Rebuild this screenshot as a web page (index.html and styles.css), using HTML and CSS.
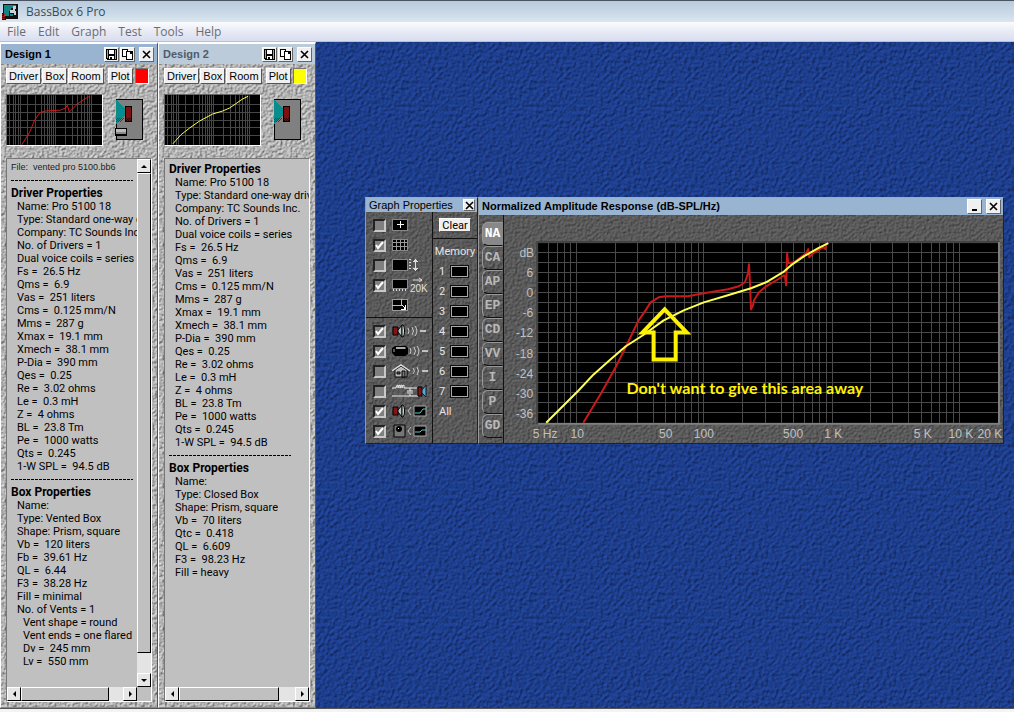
FILE: index.html
```html
<!DOCTYPE html>
<html lang="en">
<head>
    <meta charset="UTF-8">
    <meta name="viewport" content="width=device-width, initial-scale=1.0">
    <title>BassBox 6 Pro</title>
    <link rel="stylesheet" href="styles.css">
</head>
<body>
    <header class="app-title">
        <svg class="app-icon" viewBox="0 0 16 16" shape-rendering="crispEdges">
            <path fill="#111" d="M1 0h15v15H4v1H0V9h1z"/>
            <path fill="#128484" d="M2 1h12v3H9v3H7v5H2z"/>
            <path fill="#c8d4d8" d="M11 2h3v3h-1v2h1v4h-2V9H8V6h3z"/>
            <path fill="#128484" d="M8 10h3v2H8z"/>
            <path fill="#8a1c1c" d="M0 10h1v1H0zM2 10h1v1H2zM0 12h3v1H0zM0 14h3v1H0z"/>
        </svg>
        <span>BassBox 6 Pro</span>
    </header>
    <nav class="menu">
        <a href="#">File</a>
        <a href="#">Edit</a>
        <a href="#">Graph</a>
        <a href="#">Test</a>
        <a href="#">Tools</a>
        <a href="#">Help</a>
    </nav>

    <!-- shared shapes -->
    <svg class="defs" width="0" height="0">
        <symbol id="ico-save" viewBox="0 0 11 11" shape-rendering="crispEdges">
            <path d="M0 0h11v11H1v-1H0z"/>
            <path fill="#fff" d="M3 1h5v4H3zM3 7h5v3H3z"/>
            <path fill="#9aa" d="M1 1h1v8H1zM9 1h1v9H9z"/>
            <path d="M4 8h2v2H4z"/>
        </symbol>
        <symbol id="ico-copy" viewBox="0 0 11 11" shape-rendering="crispEdges">
            <path d="M0 0h6v2h5v9H4V8H0z"/>
            <path fill="#fff" d="M1 1h4v1H4v5H1zM5 3h3v2h2v5H5z"/>
        </symbol>
        <symbol id="ico-close" viewBox="0 0 9 9">
            <path d="M1 1l7 7M8 1l-7 7" stroke="#000" stroke-width="1.6"/>
        </symbol>
        <symbol id="mini-grid" viewBox="0 0 96 50">
            <path fill="none" stroke="#484848" shape-rendering="crispEdges" d="M3 0v50M7 0v50M9 0v50M12 0v50M14 0v50M21 0v50M29 0v50M35 0v50M38 0v50M41 0v50M43 0v50M45 0v50M47 0v50M49 0v50M59 0v50M66 0v50M71 0v50M75 0v50M78 0v50M81 0v50M83 0v50M85 0v50M0 9h96M0 17h96M0 25h96M0 33h96M0 41h96"/>
        </symbol>
        <symbol id="ico-driver" viewBox="0 0 14 14">
            <path fill="#861414" stroke="#000" d="M1 3h5v8H1z"/>
            <path fill="#b9c4c4" stroke="#000" d="M6 6l4-5v12L6 8z"/>
            <path fill="#cdd" stroke="#000" d="M10 1h1c2 2 2 10 0 12h-1z"/>
        </symbol>
        <symbol id="ico-waves" viewBox="0 0 20 12">
            <path fill="none" stroke="#ccc" d="M1 3q2 3 0 6M5 2q3 4 0 8M8 1q4 5 0 10"/>
            <path stroke="#ddd" stroke-width="1.6" d="M13 6h6"/>
        </symbol>
        <symbol id="ico-cabinet" viewBox="0 0 28 42" shape-rendering="crispEdges">
            <path fill="#808080" stroke="#000" d="M1 1h26v40H1z"/>
            <path fill="#0a8c8c" d="M1 2l9 8v8l-9 8z"/>
            <path fill="none" stroke="#055" stroke-dasharray="1 1" d="M1 21h7M1 23h5M2 20h7M2 22h5"/>
            <path fill="#801010" stroke="#000" d="M10 8h6v15h-6z"/>
            <path stroke="#300" stroke-dasharray="1 1" d="M11 20h5M12 21h4M11 22h5"/>
        </symbol>
    </svg>

    <main class="workspace">
        <section class="design active">
            <div class="design-title">
                <h2>Design 1</h2>
                <button class="tool" aria-label="Save"><svg width="11" height="11"><use href="#ico-save"/></svg></button>
                <button class="tool" aria-label="Copy"><svg width="11" height="11"><use href="#ico-copy"/></svg></button>
                <button class="tool close" aria-label="Close"><svg width="9" height="9"><use href="#ico-close"/></svg></button>
            </div>
            <div class="design-bar">
                <button>Driver</button>
                <button>Box</button>
                <button>Room</button>
                <button class="plot">Plot</button>
                <button class="swatch red" aria-label="Plot color"></button>
            </div>
            <div class="preview">
                <svg class="mini" viewBox="0 0 96 50">
                    <use href="#mini-grid"/>
                    <polyline fill="none" stroke="#d01c1c" points="15,50 23,37 28,25 33,18 38,16 54,15 59,13 61,10 63,17 65,15 71,9 78,4 84,1"/>
                </svg>
                <svg class="cabinet" viewBox="0 0 28 42" shape-rendering="crispEdges">
                    <use href="#ico-cabinet"/>
                    <path fill="#000" d="M0 30h12v8H0z"/>
                    <path fill="#bbb" d="M1 31h10v3H1z"/>
                    <path fill="#888" d="M1 34h10v2H1z"/>
                </svg>
            </div>
            <div class="list">
                <div class="list-text">
                    <p class="file">File:  vented pro 5100.bb6</p>
                    <hr>
                    <h3>Driver Properties</h3>
                    <ul>
                        <li>Name: Pro 5100 18</li>
                        <li>Type: Standard one-way driver</li>
                        <li>Company: TC Sounds Inc.</li>
                        <li>No. of Drivers = 1</li>
                        <li>Dual voice coils = series</li>
                        <li>Fs =  26.5 Hz</li>
                        <li>Qms =  6.9</li>
                        <li>Vas =  251 liters</li>
                        <li>Cms =  0.125 mm/N</li>
                        <li>Mms =  287 g</li>
                        <li>Xmax =  19.1 mm</li>
                        <li>Xmech =  38.1 mm</li>
                        <li>P-Dia =  390 mm</li>
                        <li>Qes =  0.25</li>
                        <li>Re =  3.02 ohms</li>
                        <li>Le =  0.3 mH</li>
                        <li>Z =  4 ohms</li>
                        <li>BL =  23.8 Tm</li>
                        <li>Pe =  1000 watts</li>
                        <li>Qts =  0.245</li>
                        <li>1-W SPL =  94.5 dB</li>
                    </ul>
                    <hr>
                    <h3>Box Properties</h3>
                    <ul>
                        <li>Name:</li>
                        <li>Type: Vented Box</li>
                        <li>Shape: Prism, square</li>
                        <li>Vb =  120 liters</li>
                        <li>Fb =  39.61 Hz</li>
                        <li>QL =  6.44</li>
                        <li>F3 =  38.28 Hz</li>
                        <li>Fill = minimal</li>
                        <li>No. of Vents = 1</li>
                        <li class="sub">Vent shape = round</li>
                        <li class="sub">Vent ends = one flared</li>
                        <li class="sub">Dv =  245 mm</li>
                        <li class="sub">Lv =  550 mm</li>
                    </ul>
                </div>
                <div class="scroll-y">
                    <button aria-label="Scroll up"><i class="up"></i></button>
                    <div class="thumb"></div>
                    <div class="track"></div>
                    <button aria-label="Scroll down"><i class="down"></i></button>
                </div>
                <div class="scroll-x">
                    <button aria-label="Scroll left"><i class="left"></i></button>
                    <div class="thumb"></div>
                    <div class="track"></div>
                    <button aria-label="Scroll right"><i class="right"></i></button>
                </div>
            </div>
        </section>

        <section class="design">
            <div class="design-title">
                <h2>Design 2</h2>
                <button class="tool" aria-label="Save"><svg width="11" height="11"><use href="#ico-save"/></svg></button>
                <button class="tool" aria-label="Copy"><svg width="11" height="11"><use href="#ico-copy"/></svg></button>
                <button class="tool close" aria-label="Close"><svg width="9" height="9"><use href="#ico-close"/></svg></button>
            </div>
            <div class="design-bar">
                <button>Driver</button>
                <button>Box</button>
                <button>Room</button>
                <button class="plot">Plot</button>
                <button class="swatch yellow" aria-label="Plot color"></button>
            </div>
            <div class="preview">
                <svg class="mini" viewBox="0 0 96 50">
                    <use href="#mini-grid"/>
                    <polyline fill="none" stroke="#ffff50" points="8,49 16,40 25,33 35,26 48,19 58,16 65,13 71,9 78,4 84,1"/>
                </svg>
                <svg class="cabinet" viewBox="0 0 28 42"><use href="#ico-cabinet"/></svg>
            </div>
            <div class="list no-y">
                <div class="list-text">
                    <h3>Driver Properties</h3>
                    <ul>
                        <li>Name: Pro 5100 18</li>
                        <li>Type: Standard one-way driver</li>
                        <li>Company: TC Sounds Inc.</li>
                        <li>No. of Drivers = 1</li>
                        <li>Dual voice coils = series</li>
                        <li>Fs =  26.5 Hz</li>
                        <li>Qms =  6.9</li>
                        <li>Vas =  251 liters</li>
                        <li>Cms =  0.125 mm/N</li>
                        <li>Mms =  287 g</li>
                        <li>Xmax =  19.1 mm</li>
                        <li>Xmech =  38.1 mm</li>
                        <li>P-Dia =  390 mm</li>
                        <li>Qes =  0.25</li>
                        <li>Re =  3.02 ohms</li>
                        <li>Le =  0.3 mH</li>
                        <li>Z =  4 ohms</li>
                        <li>BL =  23.8 Tm</li>
                        <li>Pe =  1000 watts</li>
                        <li>Qts =  0.245</li>
                        <li>1-W SPL =  94.5 dB</li>
                    </ul>
                    <hr>
                    <h3>Box Properties</h3>
                    <ul>
                        <li>Name:</li>
                        <li>Type: Closed Box</li>
                        <li>Shape: Prism, square</li>
                        <li>Vb =  70 liters</li>
                        <li>Qtc =  0.418</li>
                        <li>QL =  6.609</li>
                        <li>F3 =  98.23 Hz</li>
                        <li>Fill = heavy</li>
                    </ul>
                </div>
                <div class="scroll-x">
                    <button aria-label="Scroll left"><i class="left"></i></button>
                    <div class="thumb"></div>
                    <div class="track"></div>
                    <button aria-label="Scroll right"><i class="right"></i></button>
                </div>
            </div>
        </section>

        <div class="desktop">
            <section class="window props">
                <div class="window-title">
                    <h2>Graph Properties</h2>
                    <button class="tool" aria-label="Close"><svg width="9" height="9"><use href="#ico-close"/></svg></button>
                </div>
                <div class="props-body">
                    <div class="props-options">
                        <div class="options">
                            <label><input type="checkbox" aria-label="Cursor">
                                <svg width="16" height="12" shape-rendering="crispEdges"><path stroke="#888" d="M0 0h15v11H0z"/><path fill="#fff" d="M5 5h7v1H5zM8 2h1v7H8z"/></svg></label>
                            <label><input type="checkbox" aria-label="Grid" checked>
                                <svg width="16" height="12" shape-rendering="crispEdges"><path stroke="#888" d="M0 0h15v11H0z"/><path fill="#999" d="M1 3h14v1H1zM1 7h14v1H1zM4 1h1v10H4zM8 1h1v10H8zM12 1h1v10h-1z"/></svg></label>
                            <label><input type="checkbox" aria-label="Amplitude range">
                                <svg width="28" height="12" shape-rendering="crispEdges"><path stroke="#888" d="M0 0h15v11H0z"/><path fill="#ddd" d="M17 0h2v1h-2zM17 3h2v1h-2zM17 6h2v1h-2zM17 9h2v1h-2zM23 0h1v12h-1zM22 1h3v1h-3zM21 2h5v1h-5zM22 10h3v1h-3zM21 9h5v1h-5z"/></svg></label>
                            <label><input type="checkbox" aria-label="Extend to 20K" checked>
                                <svg width="36" height="16"><path stroke="#888" shape-rendering="crispEdges" d="M0 2h15v9H0z"/><path stroke="#ddd" shape-rendering="crispEdges" d="M1 12v2M4 12v2M7 12v2M10 12v2M13 12v2"/><path fill="none" stroke="#ddd" d="M21 3h9M27 1l3 2-3 2"/><text class="tiny" x="18" y="15">20K</text></svg></label>
                            <label class="icon-only">
                                <svg width="16" height="12" shape-rendering="crispEdges"><path stroke="#999" d="M0 0h15v11H0z"/><path fill="none" stroke="#bbb" d="M0 6h9V0"/><path fill="#fff" d="M10 6h1v1h-1zM11 7h1v1h-1zM14 6v5H9v-1h3V8h1V6z"/></svg></label>
                        </div>
                        <div class="options sources">
                            <label><input type="checkbox" aria-label="Driver response" checked>
                                <svg width="14" height="14"><use href="#ico-driver"/></svg><svg width="20" height="12"><use href="#ico-waves"/></svg></label>
                            <label><input type="checkbox" aria-label="Box response" checked>
                                <svg width="16" height="14"><path d="M3 2h11l2 2v6l-3 2H3L0 9V4z"/><path fill="#aaa" d="M4 3h9l1 1-1 1H4z"/><path fill="#555" d="M1 5h2v3H1z"/></svg><svg width="20" height="12"><use href="#ico-waves"/></svg></label>
                            <label><input type="checkbox" aria-label="Room response">
                                <svg width="36" height="14"><path fill="#bbb" stroke="#000" d="M3 6l6-4 6 4v7H3z"/><path fill="none" stroke="#ddd" stroke-width="1.5" d="M0 7l9-6 9 6"/><path stroke="#000" fill="#777" d="M5 8h3v2H5zM10 7h3v6h-3z"/><path fill="none" stroke="#ccc" d="M21 4q3 3 0 6M25 3q3 4 0 8"/><path stroke="#ddd" stroke-width="1.6" d="M30 7h6"/></svg></label>
                            <label><input type="checkbox" aria-label="Passive network">
                                <svg width="36" height="14"><path fill="none" stroke="#eee" d="M0 4h4q0-3 2-3v3q0-3 2-3v3q0-3 2-3v3q0-3 2-3v3h13M0 12h26M18 4v3M18 10v2M15 7h6M15 9h6"/><path fill="#861414" stroke="#000" d="M26 3h4v9h-4z"/><path fill="#5ac" stroke="#123" d="M30 6l4-5v12l-4-4z"/></svg></label>
                            <label><input type="checkbox" aria-label="Driver equalization" checked>
                                <svg width="14" height="14"><use href="#ico-driver"/></svg><svg width="20" height="12"><path fill="none" stroke="#bbb" d="M4 2l-3 4 3 4"/><path stroke="#aaa" d="M7 1h12v10H7z"/><path fill="none" stroke="#5cc" d="M8 8h5l3-4h3"/></svg></label>
                            <label><input type="checkbox" aria-label="Box equalization" checked>
                                <svg width="14" height="14"><path fill="#777" stroke="#000" d="M2 1h11v12H2z"/><circle cx="7" cy="5" r="3"/><path fill="#fff" d="M6 4h1v1H6z"/></svg><svg width="20" height="12"><path fill="none" stroke="#bbb" d="M4 2l-3 4 3 4"/><path stroke="#aaa" d="M7 1h12v10H7z"/><path fill="none" stroke="#5cc" d="M8 7h5l2-2h4"/></svg></label>
                        </div>
                    </div>
                    <div class="memory">
                        <div class="clear"><button>Clear</button></div>
                        <h3>Memory</h3>
                        <div class="slot"><span>1</span><button aria-label="Memory 1"></button></div>
                        <div class="slot"><span>2</span><button aria-label="Memory 2"></button></div>
                        <div class="slot"><span>3</span><button aria-label="Memory 3"></button></div>
                        <div class="slot"><span>4</span><button aria-label="Memory 4"></button></div>
                        <div class="slot"><span>5</span><button aria-label="Memory 5"></button></div>
                        <div class="slot"><span>6</span><button aria-label="Memory 6"></button></div>
                        <div class="slot"><span>7</span><button aria-label="Memory 7"></button></div>
                        <div class="slot"><span>All</span></div>
                    </div>
                </div>
            </section>

            <section class="window graph">
                <div class="window-title">
                    <h2>Normalized Amplitude Response (dB-SPL/Hz)</h2>
                    <button class="tool" aria-label="Minimize"><svg width="9" height="9"><path d="M2 7h5v2H2z"/></svg></button>
                    <button class="tool" aria-label="Close"><svg width="9" height="9"><use href="#ico-close"/></svg></button>
                </div>
                <div class="graph-body">
                    <div class="tabs">
                        <button class="on">NA</button>
                        <button>CA</button>
                        <button>AP</button>
                        <button>EP</button>
                        <button>CD</button>
                        <button>VV</button>
                        <button>I</button>
                        <button>P</button>
                        <button>GD</button>
                    </div>
                    <svg class="chart" viewBox="0 0 497 227">
                        <path fill="#444" d="M32 26h462v2H34v180h-2z"/>
                        <path fill="#808080" d="M34 207h458V27h2v182H34z"/>
                        <g transform="translate(34 28)">
                            <rect width="458" height="179" fill="#000"/>
                            <path class="grid" d="M10 0v179M19 0v179M26 0v179M32 0v179M38 0v179M77 0v179M99 0v179M115 0v179M127 0v179M137 0v179M146 0v179M153 0v179M160 0v179M165 0v179M204 0v179M226 0v179M242 0v179M254 0v179M265 0v179M273 0v179M280 0v179M287 0v179M293 0v179M331 0v179M353 0v179M369 0v179M382 0v179M392 0v179M400 0v179M407 0v179M414 0v179M420 0v179"/>
                            <path class="grid" d="M0 9h458M0 19h458M0 29h458M0 39h458M0 49h458M0 59h458M0 69h458M0 79h458M0 89h458M0 99h458M0 109h458M0 119h458M0 129h458M0 139h458M0 149h458M0 159h458M0 169h458"/>
                            <polyline class="curve red" points="45,179 63,149 77,124 87,104 100,77 107,67 112,59 120,54 127,53 149,53 165,50 189,46 200,43 206,39 209,30 210,21 211,40 212,66 214,62 215,57 220,49 227,43 239,36 245,32 246,34 247,42 248,10 249,20 255,19 267,10 269,6 270,14 274,10 284,4 286,6 287,1 289,0"/>
                            <polyline class="curve yellow" points="8,179 20,167 40,147 55,131 72,116 87,103 104,92 125,77 145,67 165,59 189,52 212,45 227,39 244,29 252,22 265,13 279,5 289,0"/>
                            <path class="arrow" d="M126 66l22 23h-11v27h-22V89h-11z"/>
                            <text class="note" x="88" y="150">Don't want to give this area away</text>
                        </g>
                        <g class="axis" text-anchor="end">
                            <text x="30" y="42">dB</text>
                            <text x="29" y="62">6</text>
                            <text x="29" y="82">0</text>
                            <text x="29" y="102">-6</text>
                            <text x="29" y="122">-12</text>
                            <text x="29" y="142">-18</text>
                            <text x="29" y="162">-24</text>
                            <text x="29" y="182">-30</text>
                            <text x="29" y="202">-36</text>
                        </g>
                        <g class="axis" text-anchor="middle">
                            <text x="41" y="222">5 Hz</text>
                            <text x="73" y="222">10</text>
                            <text x="161" y="222">50</text>
                            <text x="199" y="222">100</text>
                            <text x="288" y="222">500</text>
                            <text x="328" y="222">1 K</text>
                            <text x="417" y="222">5 K</text>
                            <text x="455" y="222">10 K</text>
                            <text x="484" y="222">20 K</text>
                        </g>
                    </svg>
                </div>
            </section>
        </div>
    </main>
    <footer class="status"></footer>
</body>
</html>
```
FILE: styles.css
```css
* {
    box-sizing: border-box;
}
body {
    margin: 0;
    height: 100vh;
    display: flex;
    flex-direction: column;
    overflow: hidden;
    font-family: "Liberation Sans", Arial, sans-serif;
    font-size: 11px;
    line-height: 13px;
    background: #f0f0f0;
    color: #000;
}
h2, h3, p, ul {
    margin: 0;
    padding: 0;
    font-size: 11px;
}
ul {
    list-style: none;
}
button {
    margin: 0;
    padding: 0;
    font: inherit;
    color: #000;
    background: #f0f0f0;
    border: 1px solid;
    border-color: #fff #555 #555 #fff;
}
svg {
    display: block;
    flex: none;
}
.defs {
    position: absolute;
}

/* application frame */
.app-title {
    height: 22px;
    flex: none;
    display: flex;
    align-items: center;
    gap: 8px;
    padding-left: 2px;
    border-top: 1px solid #4a5561;
    background: linear-gradient(#b8cbdd, #cbdae7 60%, #dbe6ef);
    font: 12px/16px "Open Sans", "Noto Sans", sans-serif;
    color: #3f4a55;
}
.app-icon {
    width: 16px;
    height: 16px;
}
.menu {
    height: 20px;
    flex: none;
    display: flex;
    align-items: center;
    gap: 12px;
    padding-left: 7px;
    background: linear-gradient(#fbfcfe, #e9ecf6 45%, #d9def0);
    border-bottom: 1px solid #b9bfd0;
}
.menu a {
    font: 12px/16px "Open Sans", "Noto Sans", sans-serif;
    color: #6d6d72;
    text-decoration: none;
}
.workspace {
    flex: 1;
    min-height: 0;
    display: flex;
}
.status {
    height: 4px;
    flex: none;
    border-top: 1px solid #555;
    background: #f4f4f4;
}

/* design panels */
.design {
    width: 158px;
    flex: none;
    display: flex;
    flex-direction: column;
    padding: 0 5px 5px 5px;
    border: 1px solid;
    border-color: #fff #555 #888 #fff;
    border-top-width: 2px;
    background: #b4b4b4 url("data:image/svg+xml,%3Csvg xmlns='http://www.w3.org/2000/svg' width='128' height='128'%3E%3Cfilter id='n' x='0' y='0' width='100%25' height='100%25' color-interpolation-filters='sRGB'%3E%3CfeTurbulence type='fractalNoise' baseFrequency='.4' numOctaves='2' stitchTiles='stitch' seed='4'/%3E%3CfeColorMatrix values='0 0 0 0 0 0 0 0 0 0 0 0 0 0 0 1 0 0 0 0'/%3E%3CfeDiffuseLighting surfaceScale='1.3' lighting-color='%23dcdcdc'%3E%3CfeDistantLight azimuth='225' elevation='55'/%3E%3C/feDiffuseLighting%3E%3C/filter%3E%3Crect width='128' height='128' filter='url(%23n)'/%3E%3C/svg%3E");
}
.design-title {
    height: 20px;
    flex: none;
    display: flex;
    align-items: center;
    margin: 0 -5px;
    padding: 0 2px 0 4px;
    background: #bccbd9;
}
.design.active .design-title {
    background: #99b4d1;
}
.design-title h2 {
    flex: 1;
    color: #4d5c6c;
}
.design.active h2 {
    color: #000;
}
.tool {
    width: 15px;
    height: 15px;
    display: flex;
    align-items: center;
    justify-content: center;
    border-color: #fff #666 #666 #fff;
}
.design-title .tool {
    margin-right: 1px;
}
.design-title .close {
    margin-left: 3px;
}
.design-bar {
    display: flex;
    gap: 1px;
    margin-top: 4px;
}
.design-bar button {
    height: 16px;
    padding: 0 2px;
}
.design-bar .plot {
    margin-left: 3px;
}
.design-bar .swatch {
    width: 14px;
    padding: 0;
    margin-left: 1px;
    border-color: #777 #fff #fff #777;
}
.swatch.red {
    background: #f00;
}
.swatch.yellow {
    background: #ff0;
}
.preview {
    display: flex;
    gap: 12px;
    margin-top: 10px;
}
.mini {
    width: 97px;
    height: 52px;
    background: #000;
    border: 1px solid;
    border-color: #666 #fff #fff #666;
}
.cabinet {
    width: 28px;
    height: 42px;
    margin-top: 4px;
}
.list {
    flex: 1;
    min-height: 0;
    margin-top: 12px;
    display: grid;
    grid-template-columns: 1fr 14px;
    grid-template-rows: 1fr 14px;
    background: #c0c0c0;
    border: 1px solid;
    border-color: #777 #fff #fff #777;
}
.list.no-y {
    grid-template-columns: 1fr;
}
.list-text {
    min-width: 0;
    overflow: hidden;
    padding: 2px 0 0 4px;
    font-family: Roboto, "Liberation Sans", sans-serif;
    white-space: pre;
    display: flex;
    flex-direction: column;
}
.no-y .list-text {
    padding-top: 4px;
}
.list-text .file {
    font: 9px/13px "Liberation Sans", Arial, sans-serif;
    color: #222;
}
.list-text h3 {
    font-size: 12px;
}
.list-text ul {
    padding-left: 6px;
}
.list-text ul {
    white-space: normal;
}
.list-text li {
    white-space: pre;
}
.list-text .sub {
    padding-left: 6px;
}
.list-text hr {
    width: 122px;
    height: 13px;
    margin: 0;
    border: 0;
    background: repeating-linear-gradient(90deg, #000 0 3px, transparent 3px 4px) 0 6px / 100% 1px no-repeat;
}
.scroll-y, .scroll-x {
    display: flex;
    background: #e4e4e4;
}
.scroll-y {
    flex-direction: column;
}
.scroll-y button, .scroll-x button {
    width: 14px;
    height: 14px;
    flex: none;
    display: flex;
    align-items: center;
    justify-content: center;
    background: #e6e6e6;
    border-color: #fff #000 #000 #fff;
}
.scroll-y .thumb, .scroll-x .thumb {
    background: #c0c0c0;
    border: 1px solid;
    border-color: #fff #000 #000 #fff;
}
.scroll-y .thumb {
    flex: 24;
}
.scroll-y .track {
    flex: 1;
}
.scroll-x .thumb {
    flex: 6;
}
.scroll-x .track {
    flex: 1;
}
.scroll-x i, .scroll-y i {
    border: 3px solid transparent;
}
.scroll-y .up {
    border-top: 0;
    border-bottom-color: #000;
}
.scroll-y .down {
    border-bottom: 0;
    border-top-color: #000;
}
.scroll-x .left {
    border-left: 0;
    border-right-color: #000;
}
.scroll-x .right {
    border-right: 0;
    border-left-color: #000;
}

/* desktop and floating windows */
.desktop {
    flex: 1;
    position: relative;
    overflow: hidden;
    background: #1f4090 url("data:image/svg+xml,%3Csvg xmlns='http://www.w3.org/2000/svg' width='128' height='128'%3E%3Cfilter id='n' x='0' y='0' width='100%25' height='100%25' color-interpolation-filters='sRGB'%3E%3CfeTurbulence type='fractalNoise' baseFrequency='.3' numOctaves='2' stitchTiles='stitch' seed='7'/%3E%3CfeColorMatrix values='0 0 0 0 0 0 0 0 0 0 0 0 0 0 0 1 0 0 0 0'/%3E%3CfeDiffuseLighting surfaceScale='1.2' lighting-color='%23244cac'%3E%3CfeDistantLight azimuth='225' elevation='55'/%3E%3C/feDiffuseLighting%3E%3C/filter%3E%3Crect width='128' height='128' filter='url(%23n)'/%3E%3C/svg%3E");
}
.window {
    position: absolute;
    top: 155px;
    border: 1px solid;
    border-color: #aaa #222 #222 #999;
    color: #e4e4e4;
    background: #5c5c5c url("data:image/svg+xml,%3Csvg xmlns='http://www.w3.org/2000/svg' width='128' height='128'%3E%3Cfilter id='n' x='0' y='0' width='100%25' height='100%25' color-interpolation-filters='sRGB'%3E%3CfeTurbulence type='fractalNoise' baseFrequency='.4' numOctaves='2' stitchTiles='stitch' seed='2'/%3E%3CfeColorMatrix values='0 0 0 0 0 0 0 0 0 0 0 0 0 0 0 1 0 0 0 0'/%3E%3CfeDiffuseLighting surfaceScale='1' lighting-color='%236e6e6e'%3E%3CfeDistantLight azimuth='225' elevation='55'/%3E%3C/feDiffuseLighting%3E%3C/filter%3E%3Crect width='128' height='128' filter='url(%23n)'/%3E%3C/svg%3E");
}
.window-title {
    display: flex;
    align-items: center;
    gap: 3px;
    padding: 0 2px 0 3px;
    background: #99b4d1;
    color: #000;
}
.window-title h2 {
    flex: 1;
    white-space: nowrap;
}
.props {
    left: 49px;
    width: 113px;
}
.props .window-title {
    height: 14px;
}
.props .window-title h2 {
    font-weight: normal;
}
.props .tool {
    width: 12px;
    height: 12px;
}
.props-body {
    display: flex;
}
.props-options {
    flex: 1;
    border-right: 1px solid #111;
}
.options {
    padding: 3px 0 2px 7px;
}
.sources {
    border-top: 1px solid #111;
}
.options label {
    height: 20px;
    display: flex;
    align-items: center;
    gap: 6px;
}
.options label svg + svg {
    margin-left: -5px;
}
.options .icon-only {
    padding-left: 19px;
}
.options input {
    appearance: none;
    flex: none;
    width: 13px;
    height: 13px;
    margin: 0;
    background: #808080;
    border: 2px solid;
    border-color: #222 #c8c8c8 #c8c8c8 #222;
}
.options input:checked {
    background: #808080 url("data:image/svg+xml,%3Csvg xmlns='http://www.w3.org/2000/svg' viewBox='0 0 9 9'%3E%3Cpath d='M1 4l2 3 5-6' fill='none' stroke='%23fff' stroke-width='2'/%3E%3C/svg%3E") center / 9px 9px;
}
.tiny {
    font-size: 10px;
    fill: #e0e0e0;
}
.memory {
    width: 44px;
    flex: none;
    font-family: Roboto, "Liberation Sans", sans-serif;
}
.clear {
    height: 27px;
    display: flex;
    justify-content: center;
    align-items: center;
    border-bottom: 1px solid #111;
}
.clear button {
    width: 32px;
    height: 14px;
    line-height: 11px;
}
.memory h3 {
    margin: 6px 0 3px;
    font-weight: normal;
    text-align: center;
}
.slot {
    height: 20px;
    display: flex;
    align-items: center;
    gap: 5px;
    padding-left: 6px;
}
.slot button {
    width: 19px;
    height: 13px;
    background: #000;
    border: 1px solid #111;
    outline: 1px solid #aaa;
    outline-offset: -2px;
}
.graph {
    left: 162px;
    width: 526px;
}
.graph .window-title {
    height: 17px;
    gap: 4px;
}
.graph-body {
    display: flex;
}
.tabs {
    width: 25px;
    flex: none;
    display: flex;
    flex-direction: column;
    padding: 7px 0 0 3px;
    border-right: 1px solid #111;
}
.tabs button {
    height: 24px;
    background: none;
    color: #b8b8b8;
    font: bold 13px/22px "Liberation Mono", "Courier New", monospace;
    border-color: #999 transparent #111 #999;
    border-radius: 6px 0 0 6px;
}
.tabs .on {
    color: #fff;
    background: #888;
}
.chart {
    flex: 1;
    min-width: 0;
}
.grid {
    fill: none;
    stroke: #4a4a4a;
    shape-rendering: crispEdges;
}
.curve {
    fill: none;
    stroke-width: 2;
    stroke-linejoin: round;
}
.curve.red {
    stroke: #cc1818;
}
.curve.yellow {
    stroke: #ffff50;
}
.arrow {
    fill: none;
    stroke: #fff200;
    stroke-width: 4;
}
.note {
    font: bold 16px Lato, sans-serif;
    fill: #fff200;
}
.axis {
    font-size: 12px;
    fill: #c0c0c0;
}
```
